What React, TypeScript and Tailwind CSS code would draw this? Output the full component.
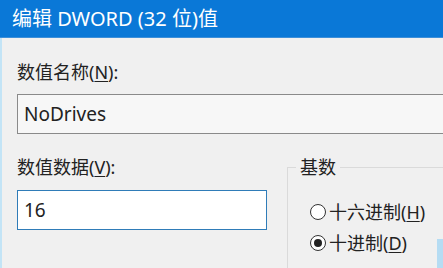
import React from "react";

const font = { fontFamily: '"Noto Sans", "Noto Sans CJK SC", sans-serif' };

function Radio({ checked, label, hot }: { checked?: boolean; label: string; hot: string }) {
  return (
    <div className="flex items-center h-[24px]">
      <div className="w-[16px] h-[16px] shrink-0 rounded-full border-[1.5px] border-[#333] bg-white flex items-center justify-center">
        {checked && <div className="w-[8px] h-[8px] rounded-full bg-[#222]" />}
      </div>
      <span className="ml-[3px] text-[18px] leading-[24px] text-[#222] whitespace-nowrap">
        {label}(<span className="underline underline-offset-2">{hot}</span>)
      </span>
    </div>
  );
}

export default function App() {
  return (
    <div className="w-[443px] h-[268px] overflow-hidden bg-[#f0f0f0] flex flex-col" style={font}>
      <div className="h-[38px] shrink-0 bg-[#0a78d7] flex items-center pl-[12px] text-[20px] text-white border-b border-[#3d8fd9] whitespace-nowrap">
        编辑 DWORD (32 位)值
      </div>
      <div className="flex-1 border-l-[2px] border-[#c3e4f6] pl-[15px] pt-[22px] flex flex-col relative">
        <div className="text-[18px] leading-[24px] text-[#222]">
          数值名称(<span className="underline underline-offset-2">N</span>):
        </div>
        <div className="mt-[10px] h-[40px] w-[440px] shrink-0 border border-[#8a8a8a] bg-[#f7f7f7] flex items-center pl-[6px] text-[19px] text-[#222]">
          NoDrives
        </div>
        <div className="flex mt-[21px]">
          <div className="w-[250px] shrink-0 flex flex-col">
            <div className="text-[18px] leading-[24px] text-[#222]">
              数值数据(<span className="underline underline-offset-2">V</span>):
            </div>
            <div className="mt-[11px] h-[40px] border-[1.5px] border-[#2f7cb8] bg-white flex items-center pl-[6px] text-[19px] text-[#222]">
              16
            </div>
          </div>
          <div className="ml-[20px] mt-[12px] w-[200px] h-[200px] shrink-0 border border-[#dadada] relative pl-[22px] pt-[32px]">
            <div className="absolute -top-[13px] left-[8px] px-[4px] bg-[#f0f0f0] text-[18px] leading-[24px] text-[#222]">
              基数
            </div>
            <Radio label="十六进制" hot="H" />
            <div className="mt-[7px]">
              <Radio checked label="十进制" hot="D" />
            </div>
          </div>
        </div>
        <div className="absolute left-[435px] top-[201px] w-[6px] h-[40px] bg-[#b5dcf3]" />
      </div>
    </div>
  );
}
